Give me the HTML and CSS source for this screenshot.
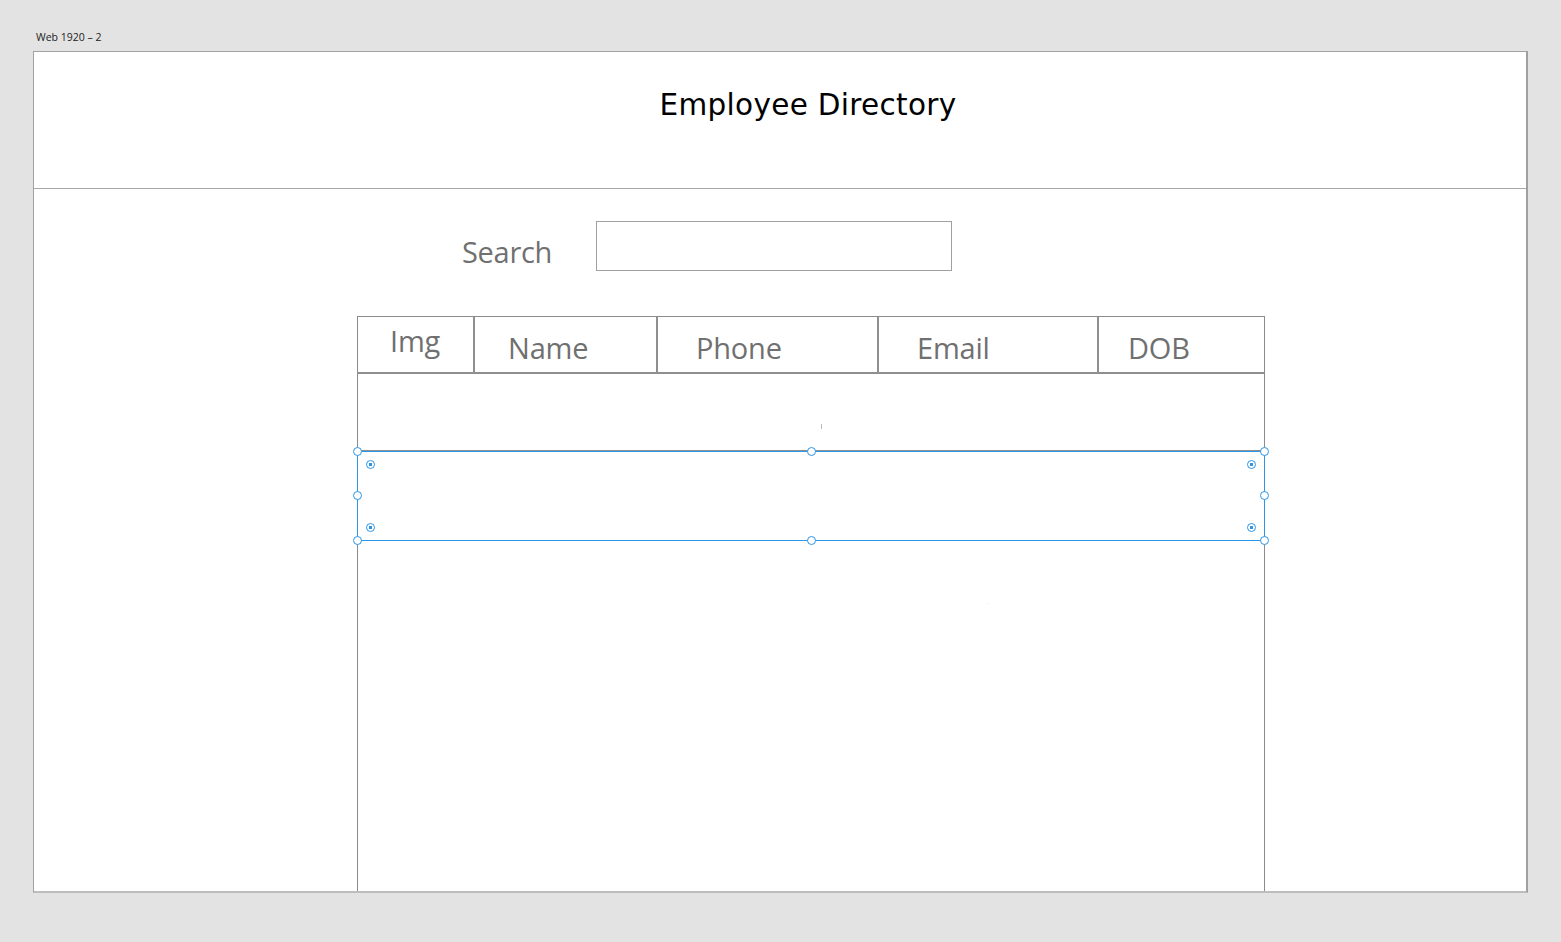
FILE: index.html
```html
<!DOCTYPE html>
<html>
<head>
<meta charset="utf-8">
<link rel="stylesheet" href="styles.css">
</head>
<body>
<div class="canvas">
  <div class="board-label">Web 1920 – 2</div>
  <div class="board">
    <header class="page-header">
      <h1 class="title">Employee Directory</h1>
    </header>
    <section class="search-row">
      <label class="search-label">Search</label>
      <div class="search-box"></div>
    </section>
    <section class="table">
      <div class="thead">
        <div class="th th-img">Img</div>
        <div class="th th-name">Name</div>
        <div class="th">Phone</div>
        <div class="th">Email</div>
        <div class="th th-last">DOB</div>
      </div>
      <div class="row row-first"><span class="tick"></span></div>
      <div class="row row-selected"></div>
      <div class="rest"><span class="speck"></span></div>
      <div class="selection">
        <span class="handle h-tl"></span>
        <span class="handle h-tm"></span>
        <span class="handle h-tr"></span>
        <span class="handle h-ml"></span>
        <span class="handle h-mr"></span>
        <span class="handle h-bl"></span>
        <span class="handle h-bm"></span>
        <span class="handle h-br"></span>
        <span class="pad p-tl"></span>
        <span class="pad p-tr"></span>
        <span class="pad p-bl"></span>
        <span class="pad p-br"></span>
      </div>
    </section>
  </div>
</div>
</body>
</html>
```
FILE: styles.css
```css
* { box-sizing: border-box; }
html, body { margin: 0; padding: 0; }
body {
  background: #e3e3e3;
  width: 1561px;
  height: 942px;
  overflow: hidden;
}
.canvas {
  padding: 30px 0 0 33px;
}
.board-label {
  font-family: "Open Sans", "Noto Sans", sans-serif;
  font-size: 10.5px;
  line-height: 14px;
  color: #222;
  padding-left: 3px;
  height: 21px;
}
.board {
  width: 1495px;
  height: 842px;
  background: #fff;
  border: 1px solid #a2a2a2;
  border-right: 2px solid #a0a0a0;
  border-bottom: 2px solid #bdbdbd;
  display: flex;
  flex-direction: column;
}
.page-header {
  height: 137px;
  border-bottom: 1px solid #a8a8a8;
  display: flex;
  justify-content: center;
}
.title {
  margin: 0;
  padding-top: 33px;
  padding-left: 56px;
  font-family: "DejaVu Sans", sans-serif;
  font-weight: normal;
  font-size: 29.5px;
  line-height: 40px;
  color: #000;
  letter-spacing: 0.3px;
}
.search-row {
  display: flex;
  align-items: flex-start;
  padding: 32px 0 0 427px;
  height: 127px;
}
.search-label {
  font-family: "Open Sans", "Noto Sans", sans-serif;
  font-size: 29px;
  line-height: 40px;
  color: #707070;
  width: 135px;
  margin-top: 11px;
  padding-left: 1px;
  letter-spacing: -0.3px;
}
.search-box {
  width: 356px;
  height: 50px;
  border: 1px solid #a0a0a0;
}
.table {
  position: relative;
  margin-left: 323px;
  width: 908px;
  flex: 1;
  border-left: 1px solid #8c8c8c;
  border-right: 1px solid #8c8c8c;
  border-top: 1px solid #8c8c8c;
  display: flex;
  flex-direction: column;
}
.thead {
  display: grid;
  grid-template-columns: 117px 183px 221px 220px 1fr;
  height: 57px;
  border-bottom: 2px solid #8f8f8f;
}
.th {
  border-right: 2px solid #8f8f8f;
  font-family: "Open Sans", "Noto Sans", sans-serif;
  font-size: 29px;
  line-height: 40px;
  color: #707070;
  padding: 11px 0 0 38px;
  letter-spacing: -0.2px;
}
.th-img {
  padding: 4px 0 0 32px;
}
.th-name { padding-left: 33px; }
.th-last { border-right: none; padding-left: 29px; }
.row-first {
  height: 78px;
  border-bottom: 2px solid #8f8f8f;
  position: relative;
}
.tick {
  position: absolute;
  left: 463px;
  top: 50px;
  width: 1px;
  height: 5px;
  background: #bbb;
}
.row-selected {
  height: 89px;
}
.rest {
  flex: 1;
  position: relative;
}
.speck {
  position: absolute;
  left: 630px;
  top: 62px;
  width: 1px;
  height: 1px;
  background: #e6e6e6;
}
.selection {
  position: absolute;
  left: -1px;
  top: 134px;
  width: 908px;
  height: 90px;
  border: 1px solid #2d96e6;
}
.handle {
  position: absolute;
  width: 9px;
  height: 9px;
  border: 1.5px solid #2d96e6;
  border-radius: 50%;
  background: #fff;
}
.h-tl { left: -5px; top: -5px; }
.h-tm { left: 449px; top: -5px; }
.h-tr { right: -5px; top: -5px; }
.h-ml { left: -5px; top: 39px; }
.h-mr { right: -5px; top: 39px; }
.h-bl { left: -5px; bottom: -5px; }
.h-bm { left: 449px; bottom: -5px; }
.h-br { right: -5px; bottom: -5px; }
.pad {
  position: absolute;
  width: 9px;
  height: 9px;
  border: 1px solid #2d96e6;
  border-radius: 50%;
  background: radial-gradient(circle, #2d96e6 0 1.6px, #fff 2px);
}
.p-tl { left: 8px; top: 8px; }
.p-tr { right: 8px; top: 8px; }
.p-bl { left: 8px; bottom: 8px; }
.p-br { right: 8px; bottom: 8px; }
```
